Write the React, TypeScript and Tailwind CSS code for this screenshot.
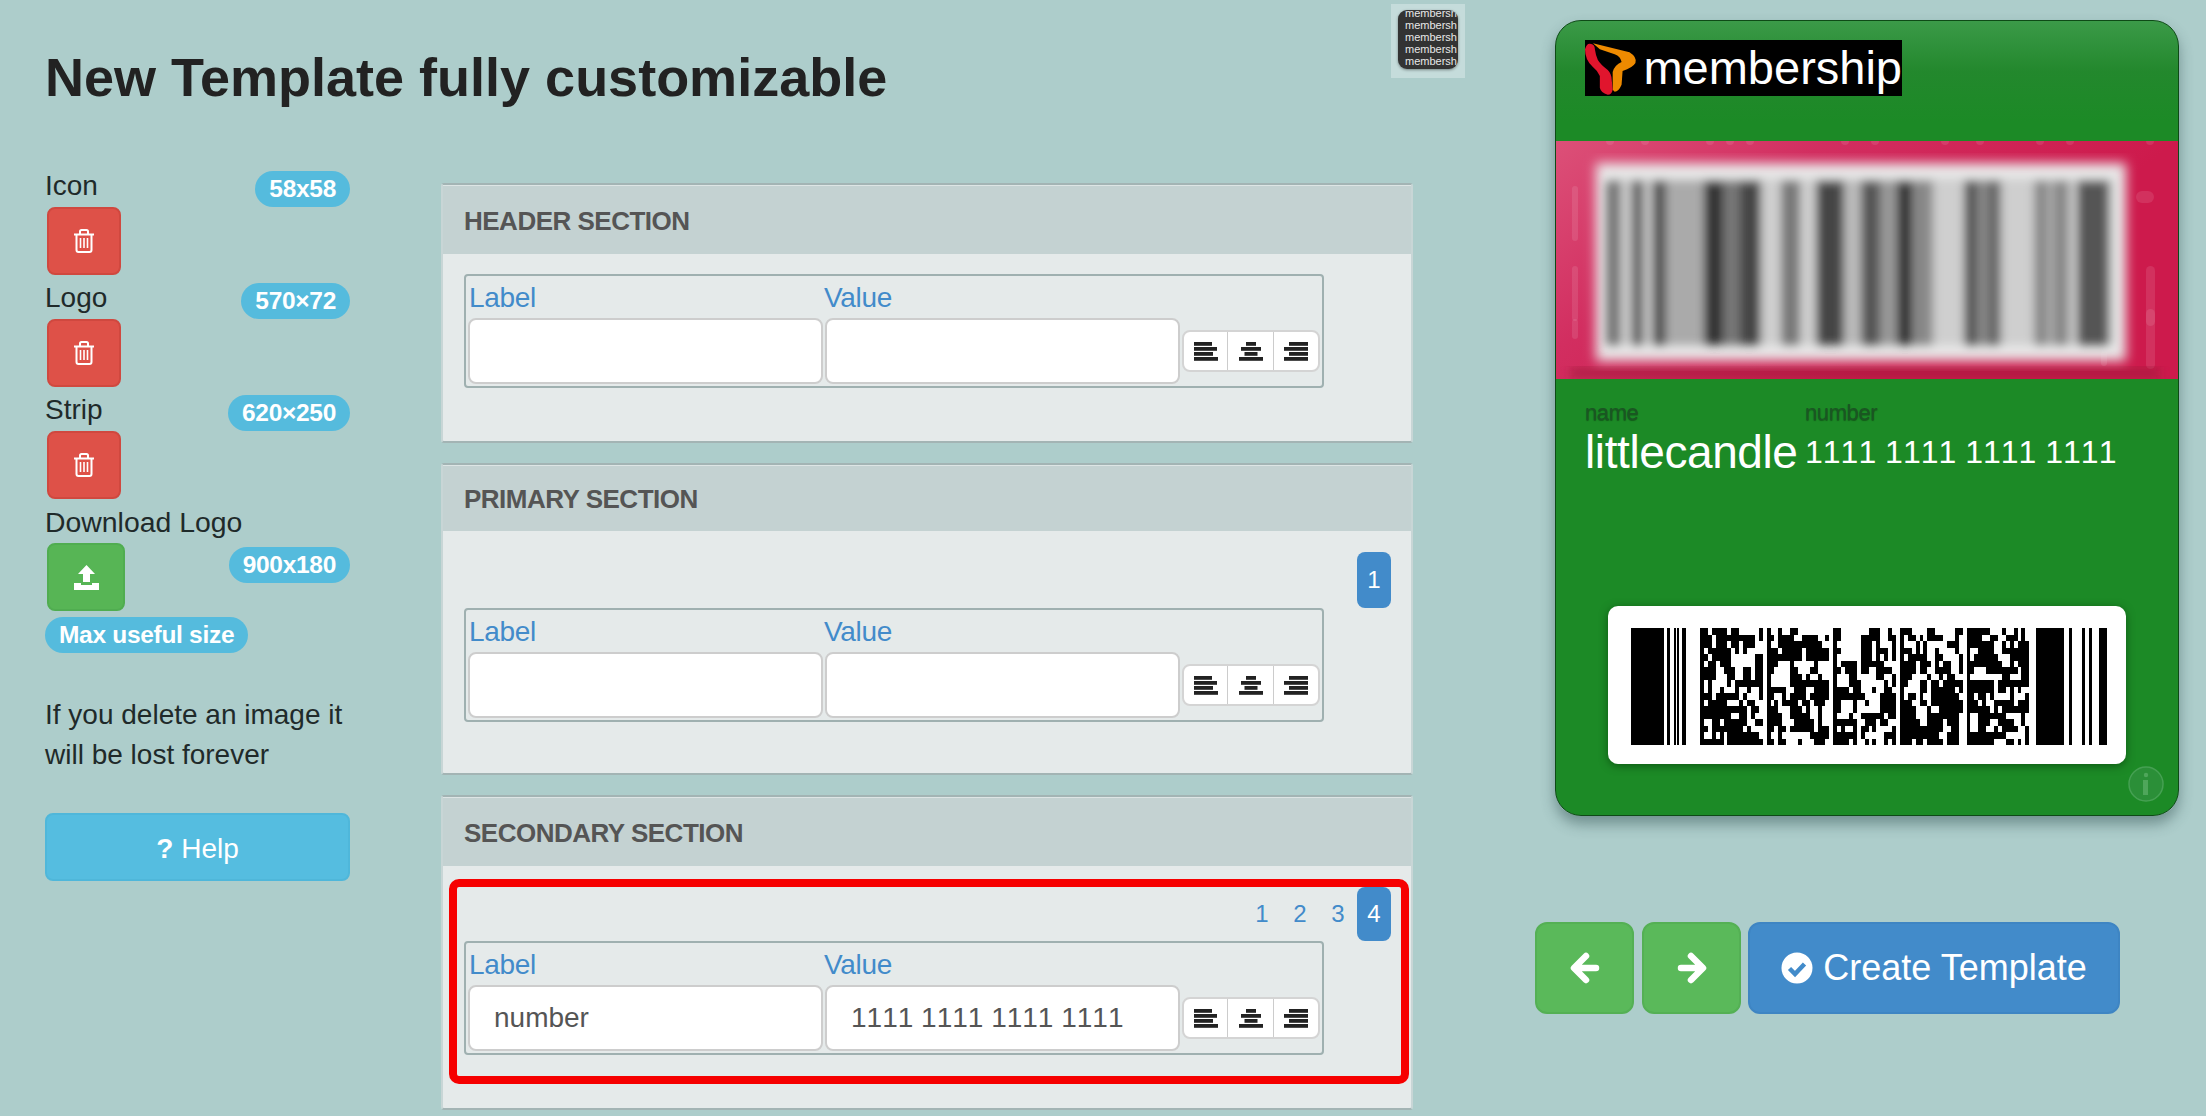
const font = "font-['Liberation_Sans',Arial,sans-serif]";

const TrashIcon = () => (
  <svg width="22" height="24" viewBox="0 0 22 24" fill="none" stroke="white" strokeWidth="2">
    <path d="M1 5.5h20M7 5V2.5Q7 1 8.5 1h5Q15 1 15 2.5V5M3.5 6v15q0 2 2 2h11q2 0 2-2V6" />
    <path d="M7.5 9v10M11 9v10M14.5 9v10" strokeWidth="1.6" />
  </svg>
);

const UploadIcon = () => (
  <svg width="27" height="27" viewBox="0 0 27 27" fill="white">
    <path d="M13.5 1 22 10h-5v8h-7v-8H5z" />
    <path d="M1 19h7v2h11v-2h7v7H1z" />
  </svg>
);

const ArrowIcon = ({ flip }: { flip?: boolean }) => (
  <svg width="30" height="32" viewBox="0 0 30 32" fill="none" stroke="white" strokeWidth="6.5" strokeLinecap="round" strokeLinejoin="round" className={flip ? "rotate-180" : ""}>
    <path d="M16 4 4 16l12 12M5 16h21" />
  </svg>
);

const CheckCircle = () => (
  <svg width="32" height="32" viewBox="0 0 32 32">
    <circle cx="16" cy="16" r="15.5" fill="white" />
    <path d="M8.5 16.5 14 22l9.5-10" fill="none" stroke="#428bca" strokeWidth="4.5" />
  </svg>
);

const AlignIcon = ({ widths, mode }: { widths: number[]; mode: "l" | "c" | "r" }) => (
  <svg width="24" height="19" viewBox="0 0 24 19" fill="#222">
    {widths.map((w, i) => (
      <rect key={i} x={mode === "l" ? 0 : mode === "c" ? (24 - w) / 2 : 24 - w} y={i * 5} width={w} height="3.8" />
    ))}
  </svg>
);

const Badge = ({ children }: { children: string }) => (
  <span className="inline-flex h-9 items-center rounded-[18px] bg-[#55bbdd] px-[14px] text-[24.5px] font-bold tracking-[-0.3px] text-white">
    {children}
  </span>
);

const DeleteSlot = ({ label, size }: { label: string; size: string }) => (
  <div>
    <div className="flex h-11 items-end justify-between">
      <span className="mt-[2px] self-center text-[28px] leading-none text-[#1f2a2a]">{label}</span>
      <Badge>{size}</Badge>
    </div>
    <button className="ml-[2px] flex h-[68px] w-[74px] items-center justify-center rounded-lg border-2 border-[#d0483f] bg-[#de5148]">
      <TrashIcon />
    </button>
  </div>
);

const Sidebar = () => (
  <div className="w-[305px] shrink-0">
    <DeleteSlot label="Icon" size="58x58" />
    <DeleteSlot label="Logo" size="570×72" />
    <DeleteSlot label="Strip" size="620×250" />
    <div className="flex h-11 items-center pt-[2px] text-[28.4px] leading-none text-[#1f2a2a]">Download Logo</div>
    <div className="flex items-start justify-between">
      <button className="ml-[2px] flex h-[68px] w-[78px] items-center justify-center rounded-lg border-2 border-[#50ad50] bg-[#57b555]">
        <UploadIcon />
      </button>
      <div className="mt-1">
        <Badge>900x180</Badge>
      </div>
    </div>
    <div className="mt-[6px]">
      <Badge>Max useful size</Badge>
    </div>
    <p className="mt-[42px] text-[28px] leading-10 text-[#1f2a2a]">
      If you delete an image it
      <br />
      will be lost forever
    </p>
    <button className="mt-[38px] flex h-[68px] w-full items-center justify-center gap-2 rounded-lg border-2 border-[#4fb7da] bg-[#55bde0] pt-[3px] text-[28px] text-white">
      <b>?</b> Help
    </button>
  </div>
);

const FieldInput = ({ value }: { value?: string }) => (
  <div className="flex h-[66px] w-[355px] shrink-0 items-center rounded-lg border-2 border-[#cdcdcd] bg-white pl-6 text-[28px] text-[#555] [font-kerning:none]">
    {value}
  </div>
);

const FieldRow = ({ label, value }: { label?: string; value?: string }) => (
  <div className="h-[114px] w-[860px] rounded-[4px] border-2 border-[#9fb0b0] px-[2px]">
    <div className="flex h-[42px] items-end pb-[6px] text-[28px] leading-none tracking-[-0.3px] text-[#428bca]">
      <span className="w-[356px] pl-[1px]">Label</span>
      <span>Value</span>
    </div>
    <div className="flex items-start gap-[2px]">
      <FieldInput value={label} />
      <FieldInput value={value} />
      <div className="mt-3 flex h-[42px] w-[138px] shrink-0 rounded-lg border-2 border-[#d4d4d4] bg-white">
        <div className="flex w-[44px] items-center justify-center border-r border-[#ccc]">
          <AlignIcon mode="l" widths={[18, 23, 19, 24]} />
        </div>
        <div className="flex w-[46px] items-center justify-center border-r border-[#ccc]">
          <AlignIcon mode="c" widths={[10, 20, 13, 24]} />
        </div>
        <div className="flex w-[44px] items-center justify-center">
          <AlignIcon mode="r" widths={[19, 24, 19, 24]} />
        </div>
      </div>
    </div>
  </div>
);

const Pager = ({ pages, active, tall }: { pages: number; active: number; tall?: boolean }) => (
  <div className={tall ? "flex h-[56px] justify-end text-[24px] text-[#428bca]" : "flex h-[54px] justify-end text-[24px] text-[#428bca]"}>
    {Array.from({ length: pages }, (_, i) => i + 1).map((n) => (
      <span
        key={n}
        className={
          n === active
            ? "flex w-[34px] items-center justify-center rounded-lg bg-[#428bca] text-white"
            : "flex w-[38px] items-center justify-center"
        }
      >
        {n}
      </span>
    ))}
  </div>
);

const Panel = ({ title, compact, children }: { title: string; compact?: boolean; children: React.ReactNode }) => (
  <section className="w-[972px] rounded-[3px] border-2 border-[#a3b4b4] border-l-[#c8d6d6] border-r-[#c8d6d6] bg-[#e5eaea]">
    <div
      className={
        compact
          ? "flex h-[66px] items-center border-t border-[#dde5e5] bg-[#c4d2d2] pl-[21px] pt-[1px] text-[26px] font-bold tracking-[-0.5px] text-[#555]"
          : "flex h-[69px] items-center border-t border-[#dde5e5] bg-[#c4d2d2] pl-[21px] pt-[2px] text-[26px] font-bold tracking-[-0.5px] text-[#555]"
      }
    >
      {title}
    </div>
    {children}
  </section>
);

const Sections = () => (
  <div className="mt-5 flex flex-col gap-5">
    <Panel title="HEADER SECTION">
      <div className="pb-[53px] pl-[21px] pt-5">
        <FieldRow />
      </div>
    </Panel>
    <Panel title="PRIMARY SECTION" compact>
      <div className="pb-[51px] pl-[21px] pr-[20px] pt-[21px]">
        <Pager pages={1} active={1} tall />
        <FieldRow />
      </div>
    </Panel>
    <Panel title="SECONDARY SECTION">
      <div className="pb-6 pl-[6px] pr-[2px] pt-[13px]">
        <div className="rounded-[10px] border-8 border-[#f60000] pb-[21px] pl-[7px] pr-[10px]">
          <Pager pages={4} active={4} />
          <FieldRow label="number" value="1111 1111 1111 1111" />
        </div>
      </div>
    </Panel>
  </div>
);

// blurred barcode bars on the strip image: [x, width, colour]
const stripBars: [number, number, string][] = [
  [50, 15, "#777"], [75, 13, "#666"], [96, 15, "#555"], [112, 36, "#aaa"], [148, 19, "#333"],
  [167, 17, "#777"], [184, 21, "#444"], [225, 19, "#777"], [260, 28, "#444"], [288, 17, "#bbb"],
  [305, 19, "#555"], [324, 17, "#999"], [341, 15, "#333"], [356, 21, "#888"], [408, 13, "#555"],
  [421, 11, "#888"], [432, 13, "#666"], [478, 15, "#888"], [496, 17, "#888"], [521, 32, "#555"],
];

const stripMarks: [number, number, number, number][] = [
  [16, 45, 6, 55], [16, 125, 6, 55], [16, 178, 6, 20], [590, 125, 9, 60], [590, 168, 9, 60],
  [580, 50, 18, 12], [545, 45, 6, 55], [545, 170, 6, 55], [50, -4, 8, 8], [85, -4, 8, 8],
  [150, -4, 8, 8], [170, -4, 8, 8], [190, -4, 8, 8], [285, -4, 8, 8], [315, -4, 8, 8],
  [385, -4, 8, 8], [420, -4, 8, 8], [480, -4, 8, 8], [510, -4, 8, 8], [590, -4, 8, 8],
];

const Strip = () => (
  <svg width="622" height="238" viewBox="0 0 622 238" className="block">
    <defs>
      <linearGradient id="stripBg" x1="0" y1="0" x2="1" y2="0.5">
        <stop offset="0" stopColor="#dc5078" />
        <stop offset="0.35" stopColor="#d22e60" />
        <stop offset="0.8" stopColor="#cd1a4c" />
      </linearGradient>
      <filter id="soft" x="-5%" y="-5%" width="110%" height="110%">
        <feGaussianBlur stdDeviation="6" />
      </filter>
      <filter id="softer" x="-5%" y="-5%" width="110%" height="110%">
        <feGaussianBlur stdDeviation="5" />
      </filter>
    </defs>
    <rect width="622" height="238" fill="url(#stripBg)" />
    {stripMarks.map(([x, y, w, h], i) => (
      <rect key={i} x={x} y={y} width={w} height={h} rx={Math.min(w, h) / 2} fill="white" opacity="0.1" />
    ))}
    <rect x="14" y="226" width="590" height="12" fill="#a01c3c" opacity="0.6" filter="url(#softer)" />
    <rect x="40" y="22" width="530" height="198" fill="#e8e8e8" filter="url(#soft)" />
    <g filter="url(#softer)">
      <rect x="50" y="38" width="508" height="166" fill="#cfcfcf" />
      {stripBars.map(([x, w, c], i) => (
        <rect key={i} x={x} y="40" width={w} height="164" fill={c} />
      ))}
    </g>
  </svg>
);

// pseudo random cells for the data area of the 2D barcode, in 17 module codewords
const COLS = 85;
const ROWS = 18;
const cells: boolean[][] = (() => {
  let seed = 417;
  const next = () => {
    seed = (seed * 16807) % 2147483647;
    return seed / 2147483647;
  };
  const rows: boolean[][] = [];
  for (let r = 0; r < ROWS; r++) {
    const row: boolean[] = [];
    for (let c = 0; c < COLS; c++) {
      const above = r > 0 && rows[r - 1][c];
      const left = c > 0 && row[c - 1];
      const pos = c % 17;
      if (pos === 16) row.push(false);
      else if (pos === 0) row.push(true);
      else if (pos === 1) row.push(next() < 0.75);
      else row.push(next() < 0.32 + (above ? 0.26 : 0) + (left ? 0.2 : 0));
    }
    rows.push(row);
  }
  return rows;
})();

const guardLeft = [[0, 33], [35.5, 3.5], [42.5, 2.5], [46, 2], [51, 4]];
const guardRight = [[0, 28], [33, 3], [46.5, 3], [53, 3], [63.6, 7.4]];

const Barcode = () => (
  <svg width="476" height="117" viewBox="0 0 476 117" shapeRendering="crispEdges" className="ml-[3px]">
    {guardLeft.map(([x, w]) => (
      <rect key={x} x={x} y="0" width={w} height="117" />
    ))}
    {cells.map((row, r) =>
      row.map((on, c) =>
        on ? <rect key={`${r}-${c}`} x={69 + c * 3.92} y={r * 6.5} width="3.92" height="6.5" /> : null,
      ),
    )}
    {guardRight.map(([x, w]) => (
      <rect key={x} x={404.5 + x} y="0" width={w} height="117" />
    ))}
  </svg>
);

const LogoMark = () => (
  <svg width="54" height="56" viewBox="0 0 54 56">
    <path d="M8 3 45 12Q53 17 51 23 48 28 38 31L37 45Q34 52 30 52L28 50V32Q30 25 37 22 36 16 30 14L15 9Z" fill="#ee8a00" />
    <path d="M0 9Q2 3 5 3.5 10 4 10 9 11 16 13 20 16 25 23 30 27 34 27 40L28 50Q27 55 23 55 16 53 15 48V36Q13 31 8 27 0 20 0 9Z" fill="#e0152d" />
  </svg>
);

const Pass = () => (
  <div className="h-[796px] w-[624px] overflow-hidden rounded-[26px] border border-[#0e4a16] bg-[linear-gradient(#3b9a48,#23882d_50px,#1c8a26_100px)] shadow-[0_8px_14px_rgba(40,70,70,0.45)]">
    <div className="h-[120px] pl-[29px] pt-[19px]">
      <div className="flex h-14 w-[317px] items-center bg-black">
        <LogoMark />
        <span className="ml-[5px] -mt-[2px] text-[47px] leading-none text-white">membership</span>
      </div>
    </div>
    <Strip />
    <div className="flex gap-2 pl-[29px] pt-5">
      <div className="w-[212px]">
        <div className="h-7 text-[22px] leading-7 tracking-[-0.4px] text-[#1b5523] [text-shadow:0_1px_1px_rgba(0,0,0,0.35)]">name</div>
        <div className="text-[46px] leading-[50px] tracking-[-0.4px] text-white">littlecandle</div>
      </div>
      <div>
        <div className="h-7 text-[22px] leading-7 tracking-[-0.4px] text-[#1b5523] [text-shadow:0_1px_1px_rgba(0,0,0,0.35)]">number</div>
        <div className="text-[32px] leading-[50px] text-white [font-kerning:none]">1111 1111 1111 1111</div>
      </div>
    </div>
    <div className="ml-[52px] mt-[129px] flex h-[158px] w-[518px] items-start justify-center rounded-[10px] bg-white pt-[22px] shadow-[0_2px_8px_rgba(0,40,0,0.5)]">
      <Barcode />
    </div>
    <div className="flex justify-end pr-[14px] pt-[2px]">
      <svg width="36" height="36" viewBox="0 0 36 36" fill="none">
        <circle cx="18" cy="18" r="17" fill="#2b8f38" stroke="#45a052" strokeWidth="1.5" />
        <circle cx="18" cy="9" r="2.2" fill="#4fa65b" />
        <path d="M15 14h5v15h-5z" fill="#4fa65b" />
      </svg>
    </div>
  </div>
);

const ThumbIcon = () => (
  <div className="flex h-[74px] w-[74px] items-start justify-center bg-[#c5dcdb] pt-[6px]">
    <div className="h-[59px] w-[60px] overflow-hidden rounded-[9px] bg-[#333] shadow-[0_1px_3px_rgba(0,0,0,0.4)]">
      <div className="-mt-[3px] pl-[7px] text-[11px] leading-[12px] text-[#e8e8e8]">
        <div>membersh</div>
        <div>membersh</div>
        <div>membersh</div>
        <div>membersh</div>
        <div>membersh</div>
      </div>
    </div>
  </div>
);

export default function App() {
  return (
    <div className={`${font} flex h-[1116px] w-[2206px] overflow-hidden bg-[#adcdcb]`}>
      <div className="w-[1465px] shrink-0 pl-[45px]">
        <div className="flex h-[163px] items-start justify-between pt-1">
          <h1 className="mt-[43px] text-[54px] font-bold leading-[60px] text-[#222]">New Template fully customizable</h1>
          <ThumbIcon />
        </div>
        <div className="flex gap-[91px]">
          <Sidebar />
          <Sections />
        </div>
      </div>
      <div className="ml-[70px] pt-5">
        <div className="ml-5">
          <Pass />
        </div>
        <div className="mt-[106px] flex gap-2">
          <button className="flex h-[92px] w-[99px] items-center justify-center rounded-xl border-2 border-[#54b054] bg-[#5ab95a]">
            <ArrowIcon />
          </button>
          <button className="flex h-[92px] w-[99px] items-center justify-center rounded-xl border-2 border-[#54b054] bg-[#5ab95a]">
            <ArrowIcon flip />
          </button>
          <button className="-ml-px flex h-[92px] w-[372px] items-center justify-center gap-[10px] rounded-xl border-2 border-[#3e85c3] bg-[#428bca] text-[36px] text-white">
            <CheckCircle />
            Create Template
          </button>
        </div>
      </div>
    </div>
  );
}
